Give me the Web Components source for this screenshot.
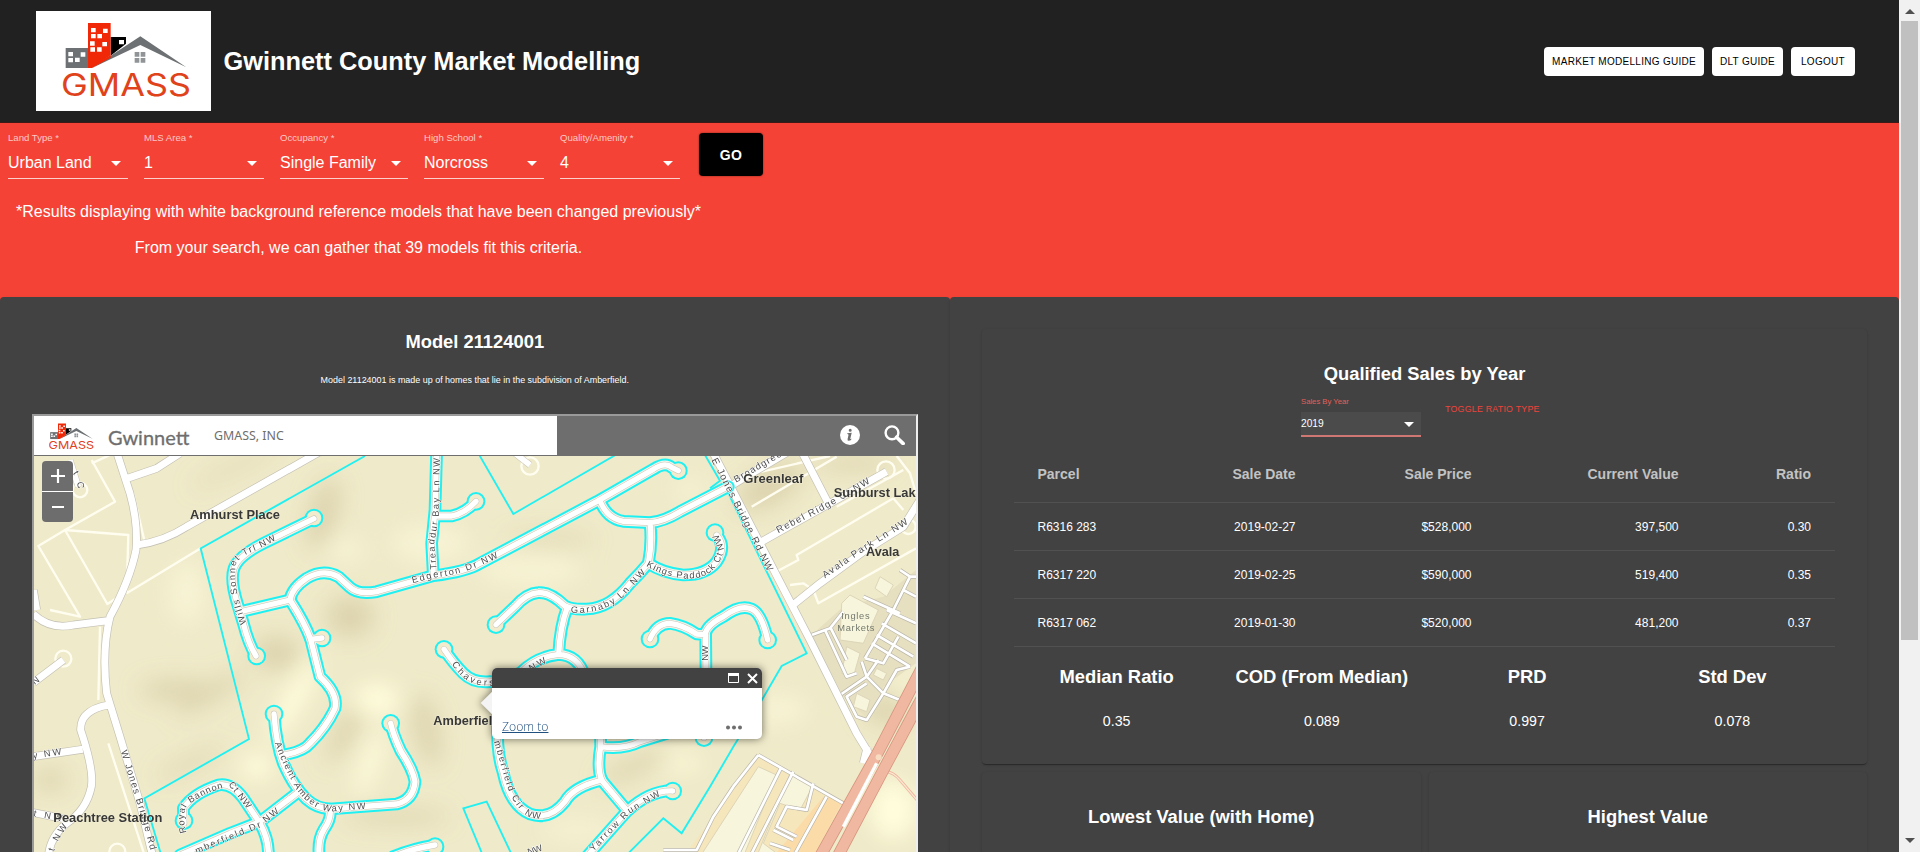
<!DOCTYPE html>
<html lang="en">
<head>
<meta charset="utf-8">
<title>Gwinnett County Market Modelling</title>
<style>
html,body{margin:0;height:100%;overflow:hidden;background:#f44336;font-family:"Liberation Sans",Arial,sans-serif;color:#fff}
</style>
</head>
<body>
<gm-app></gm-app>
<script>
const define = (name, html) => customElements.define(name, class extends HTMLElement {
  constructor() {
    super();
    const t = document.createElement('template');
    t.innerHTML = typeof html === 'function' ? html(this) : html;
    this.attachShadow({ mode: 'open' }).append(t.content.cloneNode(true));
  }
});

/* Company logo: skyline, roof and word mark */
define('gm-logo', el => `
<style>:host{display:block}svg{display:block;width:100%;height:100%}</style>
<svg viewBox="${el.getAttribute('box') || '18 18 525 300'}" preserveAspectRatio="none">
  <rect x="107" y="129" width="68" height="60" fill="#6d7173"/>
  <path d="M242 96h46v20l-46 36z" fill="#000"/>
  <path d="M174 54h68v97l-60 38h-8z" fill="#f02807"/>
  <path d="M186 189L331 94l138 93-138-67z" fill="#6d7173"/>
  <path d="M174 189L242 150 242 158 186 189z" fill="#f02807"/>
  <g fill="#fff">
    <path d="M183 69h14v13h-14zM219 71h14v13h-14zM183 87h14v13h-14zM202 87h14v13h-14zM180 109h14v13h-14zM217 111h14v13h-14zM181 127h14v13h-14zM201 127h14v13h-14z"/>
    <path d="M115 141h14v13h-14zM152 142h14v13h-14zM115 159h14v13h-14zM135 158h14v13h-14zM267 105h15v13h-15z"/>
  </g>
  <path d="M314 141h14v14h-14zM332 141h14v14h-14zM314 159h14v14h-14zM332 159h14v14h-14z" fill="#909496"/>
  <text x="93" y="272" font-family="Inter,sans-serif" font-size="92" font-weight="400" fill="#e0431b" textLength="390" lengthAdjust="spacingAndGlyphs">GMASS</text>
</svg>`);

define('gm-button', `
<style>
:host{display:inline-flex;align-items:center;justify-content:center;box-sizing:border-box;height:29px;min-width:64px;padding:0 8px;border-radius:4px;background:#fff;color:#000;font-size:10px;letter-spacing:.02857em;white-space:nowrap}
:host([kind=go]){height:43px;width:63px;margin-left:1px;background:#000;color:#fff;font-size:14px;font-weight:700;box-shadow:0 0 2px rgba(0,0,0,.5)}
:host([kind=text]){height:auto;min-width:0;padding:0;background:none;color:#f0443a;font-size:8.8px;line-height:10px}
</style><slot></slot>`);

define('gm-header', `
<style>
:host{display:flex;align-items:center;box-sizing:border-box;height:123px;padding:0 44px 0 36px;background:#212121;border-bottom:1px solid #3b1a18}
gm-logo{width:175px;height:100px;background:#fff;margin-right:12.5px}
h1{margin:0;font-size:25.35px;line-height:28px;flex:1}
nav{display:flex;gap:8px}
</style>
<gm-logo></gm-logo><h1><slot></slot></h1><nav><slot name="actions"></slot></nav>`);

define('gm-select', el => `
<style>
:host{display:flex;flex-direction:column;width:120px;box-sizing:border-box}
label{font-size:9.6px;line-height:12px;color:rgba(255,255,255,.72);white-space:nowrap}
div{display:flex;align-items:center;justify-content:space-between;height:31px;margin-top:3px;border-bottom:1px solid rgba(255,255,255,.75);font-size:16px;white-space:nowrap}
svg{width:24px;height:24px;fill:#fff;flex:none}
:host([small]) label{font-size:7.7px;line-height:10px;color:#e2605a}
:host([small]) div{height:23px;margin-top:5px;background:#4b4b4b;border-bottom:2px solid #cf7873;font-size:10.2px}
</style>
<label>${el.getAttribute('label')}</label>
<div><span><slot></slot></span><svg viewBox="0 0 24 24"><path d="M7 10l5 5 5-5z"/></svg></div>`);

define('gm-filters', `
<style>
:host{display:block;height:174px;background:#f44336}
.row{display:flex;gap:16px;padding:9px 8px 0;height:47px}
.go{padding:1px 0 0 2px}
.notes{width:717px;text-align:center;font-size:16px;line-height:20px;padding-top:23px}
</style>
<div class="row"><slot></slot><div class="go"><gm-button kind="go">GO</gm-button></div></div>
<div class="notes"><slot name="notes"></slot></div>`);

define('gm-zoom', `
<style>
:host{display:flex;flex-direction:column;width:31px;border-radius:4px;overflow:hidden;background:#6d6d6d}
i{height:30px;display:flex;align-items:center;justify-content:center}
i+i{border-top:1px solid #fff}
svg{width:16px;height:16px;stroke:#fff;stroke-width:2.2}
</style>
<i><svg viewBox="0 0 16 16"><path d="M8 1v14M1 8h14"/></svg></i><i><svg viewBox="0 0 16 16"><path d="M2 8h12"/></svg></i>`);

define('gm-popup', `
<style>
:host{display:block;width:270px;height:71px;filter:drop-shadow(0 0 4px rgba(0,0,0,.55))}
.tip{position:absolute;left:-8px;top:27px;width:16px;height:16px;background:#f4f4f4;transform:rotate(45deg)}
.box{position:relative;display:flex;flex-direction:column;height:71px;border-radius:5px;overflow:hidden;background:#fff}
header{display:flex;justify-content:flex-end;align-items:center;gap:8px;height:20px;padding-right:4px;background:#424242}
footer{display:flex;justify-content:space-between;align-items:center;margin-top:29px;height:20px;padding:0 20px 0 10px;font:300 12.2px/20px "Open Sans",sans-serif;color:#1f5080}
a{text-decoration:underline}
</style>
<div class="tip"></div>
<div class="box"><header>
<svg width="11" height="10" viewBox="0 0 11 10"><path d="M.5.5h10v9H.5z" fill="none" stroke="#fff"/><path d="M0 0h11v3H0z" fill="#fff"/></svg>
<svg width="11" height="11" viewBox="0 0 11 11"><path d="M1 1l9 9M10 1l-9 9" stroke="#fff" stroke-width="2"/></svg></header>
<footer><a>Zoom to</a><svg width="16" height="5" viewBox="0 0 16 5" fill="#6e6e6e"><circle cx="2" cy="2.5" r="2"/><circle cx="8" cy="2.5" r="2"/><circle cx="14" cy="2.5" r="2"/></svg></footer></div>`);

/* Street names follow their own invisible paths */
const street = (id, d, text, len, size = 28) =>
  `<path id="${id}" d="${d}" fill="none"/><text font-size="${size}" textLength="${len}" lengthAdjust="spacing"><textPath href="#${id}" textLength="${len}" lengthAdjust="spacing">${text}</textPath></text>`;
const bulbs = [[852,324],[680,738],[876,684],[732,912],[1082,940],[462,1232],[1338,274],[1945,182],[1398,644],[2055,368],[1242,718],[2022,983],[1928,1143],[1860,687],[2213,690],[1215,1310]];

define('gm-streetmap', `
<style>:host{display:block;overflow:hidden}svg{display:block;font-family:"Liberation Sans",sans-serif}
.hs{filter:url(#b)}.names text{font-family:"Liberation Sans",sans-serif;font-weight:700;font-size:40px;fill:#383838;stroke:#f6f2da;stroke-width:5px;paint-order:stroke;stroke-opacity:.5}
.st text{fill:#4e4e4e;stroke:#fff;stroke-width:3px;paint-order:stroke}
</style>
<svg width="882" height="396" viewBox="12 138 2646 1188" preserveAspectRatio="none">
<defs>
<filter id="b" filterUnits="userSpaceOnUse" x="-200" y="0" width="3100" height="1500"><feGaussianBlur stdDeviation="34"/></filter>
<g id="net" fill="none" stroke-linecap="round" stroke-linejoin="round">
<path d="M852 326L700 400Q625 438 612 475Q600 510 622 580L640 640Q655 700 678 738M640 603L780 570M876 684L842 688"/>
<path d="M732 912Q738 1000 760 1060Q790 1130 830 1168Q860 1195 900 1197L1100 1182Q1150 1170 1155 1115Q1150 1080 1112 1022Q1090 975 1082 940M760 1035Q820 1025 840 1000Q890 950 915 895Q925 850 870 800L842 688Q825 640 780 570Q785 535 830 505Q880 475 925 500L960 532Q985 555 1040 545L1210 497Q1310 485 1350 460L1700 275L1870 178Q1905 155 1925 172L1945 182"/>
<path d="M900 1197Q905 1225 882 1258Q862 1290 868 1340M800 1150L690 1235L600 1270L450 1335M462 1240L460 1195Q490 1150 565 1125Q605 1118 640 1165L690 1240Q718 1290 715 1340"/>
<path d="M1220 120L1215 300L1205 400L1210 495M1215 318L1265 318Q1305 310 1338 274"/>
<path d="M1710 272Q1730 325 1780 334L1860 338Q1900 335 1950 305L2095 230M1860 338Q1867 400 1855 460Q1830 490 1800 520Q1740 595 1670 597Q1630 600 1605 588Q1560 545 1525 548Q1490 550 1455 590L1398 644"/>
<path d="M1855 460Q1900 490 1960 495Q2030 495 2060 455Q2090 410 2060 375M1612 592Q1590 650 1586 733Q1520 740 1475 785Q1440 818 1380 815Q1330 820 1300 790Q1270 760 1242 718M1586 733Q1645 735 1665 800L1710 890L1712 1010Q1700 1075 1716 1112L1790 1200M1712 1010Q1780 1020 1830 995L1910 970"/>
<path d="M1403 950Q1400 1030 1420 1090Q1440 1185 1500 1212Q1560 1232 1605 1175Q1630 1130 1716 1110M1670 1340L1790 1205Q1860 1140 1928 1143M1860 687Q1880 640 1920 640Q1960 645 2000 672L2025 674Q2030 645 2080 620Q2130 582 2165 597Q2195 610 2213 690M2027 674L2028 800M2022 983L2022 900M1090 1340Q1150 1315 1215 1305"/>
</g>
<g id="main" fill="none" stroke-linejoin="round">
<path d="M258 120L300 250Q325 340 318 420Q300 510 240 620Q215 720 230 850L270 980L330 1180L368 1340M320 405Q400 395 470 350L870 125M292 205L380 175L450 130M10 612Q60 660 130 645L232 632M235 885Q150 900 152 960Q192 1080 184 1130Q170 1200 110 1240Q60 1280 55 1340M10 1040L158 1018M10 1208L112 1228M10 818L100 750M10 540L20 600"/>
<path d="M2040 110L2340 690L2480 970L2535 1060M2095 232L2270 128M2315 125L2400 290M2195 395L2400 280L2570 185M2285 588L2370 520L2500 425L2620 350L2670 270M2500 1060L2512 1010"/>
</g>
<path id="lt" fill="none" stroke-linejoin="round" d="M2345 675L2400 655L2440 605M2385 660L2450 800L2480 790M2400 650L2450 750M2430 855L2510 800L2545 750M2570 600L2658 640M2555 640L2658 700M2540 675L2650 740M2525 700L2640 770M2505 745L2590 600L2640 500L2610 480M2500 560L2610 610M2505 745L2560 760L2605 680M2510 800L2560 850L2610 870M2560 850L2510 930L2480 920L2450 860L2510 820M2495 755L2510 800M2658 560L2620 540M2640 500L2658 500M2560 850L2600 780L2640 770M2255 1070L2120 1340M2185 1035L2440 1180M2185 1035L2110 1130L2050 1220L2000 1320L1900 1320M2290 1085L2160 1340M2350 1120L2330 1200L2270 1190L2240 1250L2300 1280M2390 1160L2290 1340M2230 1260L2290 1290M2220 1300L2280 1320"/>
</defs>
<rect x="0" y="120" width="2680" height="1220" fill="#efeac9"/>
<g class="hs">
<g fill="#d6caa3" opacity=".72"><ellipse cx="880" cy="310" rx="40" ry="110" transform="rotate(15 880 310)"/><ellipse cx="440" cy="840" rx="110" ry="28"/><ellipse cx="740" cy="730" rx="70" ry="50"/><ellipse cx="540" cy="850" rx="120" ry="22" transform="rotate(-30 540 850)"/><ellipse cx="950" cy="960" rx="28" ry="110" transform="rotate(30 950 960)"/><ellipse cx="1190" cy="960" rx="34" ry="110" transform="rotate(-12 1190 960)"/><ellipse cx="1560" cy="390" rx="130" ry="14"/><ellipse cx="960" cy="620" rx="70" ry="60"/><ellipse cx="2220" cy="230" rx="110" ry="50" transform="rotate(-30 2220 230)"/><ellipse cx="1810" cy="1070" rx="110" ry="22" transform="rotate(-25 1810 1070)"/><ellipse cx="60" cy="1110" rx="50" ry="30"/><ellipse cx="480" cy="1060" rx="110" ry="14" transform="rotate(-25 480 1060)"/><ellipse cx="2570" cy="900" rx="70" ry="40"/><ellipse cx="1100" cy="1220" rx="160" ry="18"/><ellipse cx="620" cy="170" rx="150" ry="10" transform="rotate(-25 620 170)"/><ellipse cx="2470" cy="160" rx="120" ry="20"/></g>
<g fill="#fffddc"><ellipse cx="790" cy="870" rx="32" ry="150" transform="rotate(30 790 870)"/><ellipse cx="1040" cy="870" rx="70" ry="50"/><ellipse cx="1020" cy="1060" rx="26" ry="110" transform="rotate(20 1020 1060)"/><ellipse cx="680" cy="1070" rx="50" ry="40"/><ellipse cx="2590" cy="1200" rx="70" ry="90"/><ellipse cx="2630" cy="800" rx="10" ry="100"/><ellipse cx="1960" cy="1060" rx="60" ry="20"/></g>
<g fill="#f8f5d6" opacity=".8"><ellipse cx="1200" cy="400" rx="120" ry="60"/><ellipse cx="1500" cy="480" rx="160" ry="50"/><ellipse cx="2240" cy="900" rx="100" ry="50"/><ellipse cx="950" cy="420" rx="60" ry="40"/><ellipse cx="470" cy="550" rx="60" ry="100"/><ellipse cx="1980" cy="240" rx="60" ry="30"/><ellipse cx="1640" cy="1260" rx="120" ry="30"/></g>
</g>
<!-- parcel edges -->
<g fill="none" stroke="#fffdf0" stroke-width="7" stroke-linejoin="round">
<path d="M185 150L255 275L105 360L25 408L150 620L60 600M105 360L295 375L290 545L232 582L105 360M290 550L512 415M185 160L240 135M345 400L310 250M210 650L205 870M235 1000L345 1340"/>
<path d="M2130 200L2400 138M2165 290L2420 140M2230 490L2305 450L2300 435L2590 265M2280 525L2320 520L2350 540L2365 580L2658 415M2350 545L2420 490M2590 265L2620 300M2600 138L2640 190L2658 250M2420 290L2620 180"/>
<circle cx="100" cy="746" r="24"/><circle cx="150" cy="240" r="22"/><circle cx="2568" cy="180" r="26"/><circle cx="1500" cy="168" r="26"/><circle cx="262" cy="1325" r="24"/><circle cx="2635" cy="350" r="22"/></g>
<g fill="none" stroke="#c9c5b6" stroke-width="20"><path d="M1455 130L1500 165M120 150L145 230"/></g><g fill="none" stroke="#fff" stroke-width="17"><path d="M1455 130L1500 165M120 150L145 230"/></g>
<!-- commercial blocks -->
<path d="M2190 1035L2440 1180L2360 1340H1960L2050 1220L2110 1130z" fill="#f6e6bc"/>
<path d="M2440 1170L2350 1340L2230 1340L2380 1160z" fill="#fbdca8"/>
<path d="M2345 675L2440 590L2560 560L2658 480V760L2560 830L2520 930L2440 860z" fill="#e6dfc0"/>
<g fill="#f7f5dc" stroke="#ddd5b8" stroke-width="3"><path d="M2185 1070L2240 1095L2140 1340L2010 1340z"/><path d="M2280 1090L2350 1125L2310 1200L2250 1180L2200 1300L2240 1330L2180 1340z"/><path d="M2435 580L2460 555L2545 600L2500 700L2430 690z"/><path d="M2550 500L2590 525L2570 560L2535 535z"/><path d="M2450 710L2490 730L2470 800L2435 790z"/><path d="M2540 775L2570 790L2560 810L2530 795zM2480 850L2520 870L2510 905L2470 890z"/></g>
<use href="#lt" stroke="#b9b6aa" stroke-width="12"/><use href="#lt" stroke="#fff" stroke-width="8"/>
<use href="#main" stroke="#c3c0b4" stroke-width="25"/><use href="#main" stroke="#fff" stroke-width="21"/>
<!-- highway -->
<g fill="none"><path d="M2550 1090Q2580 1075 2610 1110L2670 1180" stroke="#eeb59e" stroke-width="9"/><path d="M2550 1090Q2580 1075 2610 1110L2670 1180" stroke="#fbe6cf" stroke-width="4"/>
<g stroke="#d6957f" stroke-width="36"><path d="M2675 775L2545 1025L2367 1345M2675 865L2560 1080L2420 1345"/></g><g stroke="#f1b8a1" stroke-width="31"><path d="M2675 775L2545 1025L2367 1345M2675 865L2560 1080L2420 1345"/></g><path d="M2540 1060L2440 1250" stroke="#fff" stroke-width="10"/></g>
<circle cx="2546" cy="1042" r="9" fill="#f8dcc2"/>
<!-- subdivision streets: outline, verge, kerb, roadway -->
<g fill="none" stroke="#1ff0f2" stroke-width="5.5"><path d="M1005 138L512 415L657 987L343 1165L395 1340M1345 130L1450 312L1765 130M2022 130L2070 212L2040 235M2095 250L2330 730L2255 768L2190 880L2110 1010L2040 1130L1955 1270L1900 1225L1785 1340M1448 1340L1370 1175L1300 1195L1360 1340"/></g>
<use href="#net" stroke="#1ff0f2" stroke-width="38"/><g fill="#1ff0f2">${bulbs.map(b=>`<circle cx="${b[0]}" cy="${b[1]}" r="28"/>`).join('')}</g>
<use href="#net" stroke="#f3f2e4" stroke-width="26"/><g fill="#f2eccd">${bulbs.map(b=>`<circle cx="${b[0]}" cy="${b[1]}" r="22"/>`).join('')}</g>
<use href="#net" stroke="#c6c6bc" stroke-width="19"/><use href="#net" stroke="#fff" stroke-width="16"/>
<g class="st">
${street('s1','M650 640Q610 540 617 465Q625 440 680 420L800 358','Wills Sonnet Trl NW',325)}
${street('s2','M1220 478L1213 400L1226 320L1230 120','Treaddur Bay Ln NW',335)}
${street('s3','M1148 520L1215 502Q1310 495 1430 428','Edgerton Dr NW',270)}
${street('s4','M734 1000Q760 1070 800 1140Q840 1195 900 1205L1080 1190','Ancient Amber Way NW',385)}
${street('s5','M470 1268Q450 1200 480 1180Q540 1140 600 1130L700 1260','Royal Bannon Ct NW',310)}
${street('s6','M500 1332L600 1290L690 1253L770 1190','mberfield Dr NW',280)}
${street('s7','M272 1024L340 1240L375 1375','W Jones Bridge Rd',310,29)}
${street('s8','M1265 762Q1310 835 1390 826Q1460 815 1570 745','Chavers Way NW',325)}
${street('s9','M1622 608Q1720 615 1780 560L1860 475','Garnaby Ln NW',268)}
${street('s10','M1848 468Q1920 510 1990 505Q2060 500 2082 420Q2070 370 2030 330','Kings Paddock Ct NW',335)}
${street('s11','M2044 150L2155 370L2300 660','E Jones Bridge Rd NW',375,30)}
${street('s12','M2118 218L2270 130','Broadgree',160)}
${street('s13','M2245 370L2400 290L2560 195','Rebel Ridge Ct NW',315,29)}
${street('s14','M2385 505L2500 425L2660 325','Avala Park Ln NW',300,29)}
${street('s15','M1392 995L1420 1090Q1445 1195 1500 1222Q1560 1240 1600 1180','mberfield Cir NW',290)}
${street('s16','M1690 1325L1800 1211L1910 1145','Yarrow Run NW',265)}
${street('s17','M2034 752L2034 690','NW',46)}
${street('s18','M10 1046L140 1026','y NW',86)}
${street('s19','M10 1219L120 1238','t NW',86)}
${street('s20','M72 1324Q80 1290 130 1226','t NW',86)}
${street('s21','M14 825L60 790','N',22)}
${street('s22','M128 190Q152 225 140 270','t C',50)}
${street('s24','M1496 1336L1560 1314','NW',46)}
</g>
<g class="names">
<text x="480" y="327" textLength="270" lengthAdjust="spacingAndGlyphs">Amhurst Place</text>
<text x="1210" y="945" textLength="200" lengthAdjust="spacingAndGlyphs">Amberfield</text>
<text x="70" y="1236" textLength="327" lengthAdjust="spacingAndGlyphs">Peachtree Station</text>
<text x="2140" y="219" textLength="180" lengthAdjust="spacingAndGlyphs">Greenleaf</text>
<text x="2411" y="261" textLength="246" lengthAdjust="spacingAndGlyphs">Sunburst Lak</text>
<text x="2508" y="438" textLength="100" lengthAdjust="spacingAndGlyphs">Avala</text>
</g>
<g font-size="28" fill="#74796e" letter-spacing="2"><text x="2434" y="627">Ingles</text><text x="2422" y="663">Markets</text></g>
</svg>`);

define('gm-map', `
<style>
:host{display:block;position:relative;box-sizing:border-box;width:886px;height:520px;border:2px solid #9a9a9a;border-right-color:#eee}
header{display:flex;height:39px;background:#6e6e6e;border-bottom:1px solid #6e6e6e}
.brand{display:flex;align-items:center;box-sizing:border-box;width:523px;background:#fff;padding-left:15px;color:#6e6e6e;white-space:nowrap}
gm-logo{width:45px;height:26px}
b{font:400 20px/26px Lato,sans-serif;margin:2px 0 0 14px;width:106px;-webkit-text-stroke:.3px #6e6e6e}
span{font:400 12.4px/20px "Noto Sans",sans-serif}
.tools{display:flex;flex:1;justify-content:flex-end;align-items:center;gap:24px;padding:0 11px 2px 0}
gm-zoom{position:absolute;left:8px;top:45px}
gm-popup{position:absolute;left:458px;top:252px}
</style>
<header><div class="brand"><gm-logo box="97 50 385 225"></gm-logo><b>Gwinnett</b><span>GMASS, INC</span></div>
<div class="tools">
<svg width="20" height="20" viewBox="0 0 20 20"><circle cx="10" cy="10" r="10" fill="#fff"/><path d="M10.2 3.8a1.5 1.5 0 1 1 0 3 1.5 1.5 0 0 1 0-3zM7.3 8.2l4.4-.5-1.4 6q-.1.8 1.6-.2-.9 2.3-3.1 2.3-1.6-.1-1.2-1.9l.9-4q.1-.9-1.2-.9z" fill="#6e6e6e"/></svg>
<svg width="21" height="20" viewBox="0 0 21 20" fill="none" stroke="#fff"><circle cx="8" cy="7.8" r="6.4" stroke-width="2.4"/><path d="M12.6 12.2l6.6 6.4" stroke-width="3.6" stroke-linecap="round"/></svg>
</div></header>
<gm-streetmap></gm-streetmap><gm-zoom></gm-zoom><gm-popup></gm-popup>`);

define('gm-card', `
<style>:host{display:block;box-sizing:border-box;background:#424242;border-radius:4px;box-shadow:0 2px 1px -1px rgba(0,0,0,.2),0 1px 1px rgba(0,0,0,.14),0 1px 3px rgba(0,0,0,.12)}
</style><slot></slot>`);

const rows = [['R6316 283','2019-02-27','$528,000','397,500','0.30'],['R6317 220','2019-02-25','$590,000','519,400','0.35'],['R6317 062','2019-01-30','$520,000','481,200','0.37']];
const cells = r => r.map(c => `<span>${c}</span>`).join('');
define('gm-table', `
<style>
:host{display:block}
div{display:grid;grid-template-columns:150px 155.5px 176px 207px 1fr;align-items:center;height:47px;border-bottom:1px solid #515151;font-size:12px;text-align:right}
div.h{height:56px;font-size:14px;font-weight:700;color:#c3c3c3}
span{padding-right:24px;white-space:nowrap}span:first-child{padding:0 0 0 23.5px;text-align:left}
</style>
<div class="h">${cells(['Parcel','Sale Date','Sale Price','Current Value','Ratio'])}</div>${rows.map(r=>`<div>${cells(r)}</div>`).join('')}`);

define('gm-stat', el => `
<style>:host{display:flex;flex-direction:column;align-items:center;flex:1 1 0;min-width:0;white-space:nowrap}
b{font-size:18.4px;line-height:22px}span{font-size:14.2px;line-height:20px;margin-top:23px}</style>
<b>${el.getAttribute('label')}</b><span><slot></slot></span>`);

define('gm-scrollbar', `
<style>:host{display:flex;flex-direction:column;align-items:center;width:21px;background:#f1f1f1}
i{width:0;height:0;border:5px solid transparent}
.u{border-bottom-color:#505050;border-top:0;margin:9px 0 7px}.t{width:17px;height:619px;background:#c0c0c0}.d{border-top-color:#505050;border-bottom:0;margin-top:198px}</style>
<i class="u"></i><div class="t"></div><i class="d"></i>`);

define('gm-app', `
<style>
:host{display:flex;height:852px;width:1920px;overflow:hidden}
main{width:1899px;height:852px;overflow:hidden}
h2{margin:0;font-size:18.35px;line-height:22px;text-align:center}
.cols{display:grid;grid-template-columns:949.5px 949.5px}
.l,.r{height:900px;border-radius:4px}
.l{padding:34px 32px 0}
.l p{margin:20px 0 0;text-align:center;font-size:8.95px;line-height:14px}
gm-map{margin-top:27px}
.r{padding:32px 32px 0 32.5px}
.q{height:435px;padding:34px 32px 0}
.ctl{display:flex;gap:24px;margin-left:287px;margin-top:12px;height:49px}
.ctl gm-button{margin-top:7px;align-self:flex-start}
.stats{display:flex;margin-top:19px}
.two{display:grid;grid-template-columns:1fr 1fr;gap:8px;margin-top:8px}
.two gm-card{height:200px;padding-top:34px}
</style>
<main>
<gm-header>Gwinnett County Market Modelling<gm-button slot="actions">MARKET MODELLING GUIDE</gm-button><gm-button slot="actions">DLT GUIDE</gm-button><gm-button slot="actions">LOGOUT</gm-button></gm-header>
<gm-filters>
<gm-select label="Land Type *">Urban Land</gm-select><gm-select label="MLS Area *">1</gm-select><gm-select label="Occupancy *" style="width:128px">Single Family</gm-select><gm-select label="High School *">Norcross</gm-select><gm-select label="Quality/Amenity *">4</gm-select>
<p slot="notes" style="margin:0 0 16px">*Results displaying with white background reference models that have been changed previously*</p><p slot="notes" style="margin:0">From your search, we can gather that 39 models fit this criteria.</p>
</gm-filters>
<div class="cols">
<gm-card class="l"><h2>Model 21124001</h2><p>Model 21124001 is made up of homes that lie in the subdivision of Amberfield.</p><gm-map></gm-map></gm-card>
<gm-card class="r">
<gm-card class="q"><h2>Qualified Sales by Year</h2>
<div class="ctl"><gm-select small label="Sales By Year">2019</gm-select><gm-button kind="text">TOGGLE RATIO TYPE</gm-button></div>
<gm-table></gm-table>
<div class="stats"><gm-stat label="Median Ratio">0.35</gm-stat><gm-stat label="COD (From Median)">0.089</gm-stat><gm-stat label="PRD">0.997</gm-stat><gm-stat label="Std Dev">0.078</gm-stat></div></gm-card>
<div class="two"><gm-card><h2>Lowest Value (with Home)</h2></gm-card><gm-card><h2>Highest Value</h2></gm-card></div>
</gm-card>
</div>
</main>
<gm-scrollbar></gm-scrollbar>`);
</script>
</body>
</html>
